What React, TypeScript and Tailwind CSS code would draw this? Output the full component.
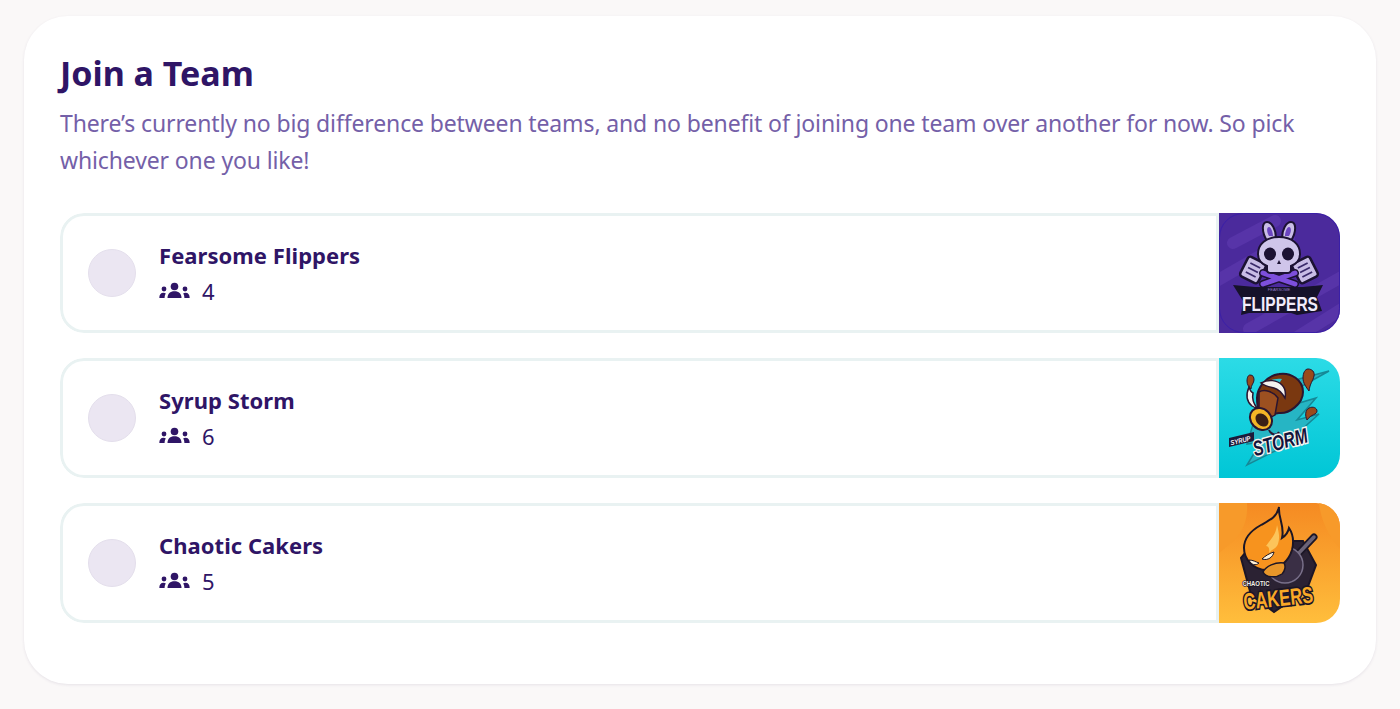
const TEAMS = [
  { name: 'Fearsome Flippers', count: 4, logo: 'flippers' },
  { name: 'Syrup Storm', count: 6, logo: 'storm' },
  { name: 'Chaotic Cakers', count: 5, logo: 'cakers' },
]

const LOGO_FONT = 'Liberation Sans, sans-serif'

function PeopleIcon() {
  return (
    <svg width="31" height="17" viewBox="0 0 31 17" fill="#2f1566">
      <circle cx="15.500" cy="4.500" r="3.800" />
      <path d="M8.500 16c0-4.200 2.600-6.700 7-6.700s7 2.500 7 6.700z" />
      <circle cx="5" cy="7" r="2.400" />
      <path d="M0.300 16c0-3.200 1.400-5.200 4.200-5.200 1 0 1.700.2 2.300.6-.8 1.200-1.200 2.700-1.200 4.600z" />
      <circle cx="26" cy="7" r="2.400" />
      <path d="M30.700 16c0-3.200-1.400-5.200-4.200-5.200-1 0-1.700.2-2.300.6.8 1.200 1.200 2.700 1.200 4.600z" />
    </svg>
  )
}

function FlippersLogo() {
  const spatula = (
    <g>
      <rect x="-10" y="-11" width="20" height="22" rx="3" fill="#c9bde6" stroke="#1c1233" strokeWidth="2.500" />
      <path d="M-5.500-5H5.500M-5.500 0H5.500M-5.500 5H5.500" stroke="#3a2a6a" strokeWidth="1.800" />
    </g>
  )
  return (
    <svg viewBox="0 0 121 120" className="w-full h-full block">
      <rect width="121" height="120" fill="#4b2a9c" />
      <path d="M14 30L56 8M-6 70L70 26M30 116L126 62M78 124L126 94" stroke="#5734a8" strokeWidth="12" strokeLinecap="round" />
      <rect x="0.500" y="0.500" width="120" height="119" rx="24" fill="none" stroke="#3a1fa8" />
      <path d="M48 28c-6-10-5-19 0-19 5 0 9 8 9 16zM72 28c6-10 5-19 0-19-5 0-9 8-9 16z" fill="#c9bde6" stroke="#1c1233" strokeWidth="2" />
      <path d="M50 23c-3-5-2-9 0-9 2 0 4 5 4 9zM70 23c3-5 2-9 0-9-2 0-4 5-4 9z" fill="#6b45c0" />
      <g transform="translate(34 57) rotate(27)">{spatula}</g>
      <g transform="translate(86 57) rotate(-27)">{spatula}</g>
      <path d="M44 60L76 71M76 60L44 71" stroke="#1c1233" strokeWidth="8" strokeLinecap="round" />
      <path d="M44 60L76 71M76 60L44 71" stroke="#7d4fdc" strokeWidth="5" strokeLinecap="round" />
      <path d="M60 24c-13 0-21 7-21 17 0 6 4 10 9 12v4c0 2 2 3 4 3h16c2 0 4-1 4-3v-4c5-2 9-6 9-12 0-10-8-17-21-17z" fill="#cfc5ea" stroke="#1c1233" strokeWidth="2" />
      <ellipse cx="51" cy="41" rx="6" ry="6.500" fill="#1c1233" />
      <ellipse cx="69" cy="41" rx="6" ry="6.500" fill="#1c1233" />
      <path d="M60 47l-2 4h4z" fill="#1c1233" />
      <path d="M14 72L36 74H84L104 72 98 84 103 98 78 102 72 100H30L22 102 24 88z" fill="#16122a" />
      <text x="60" y="77.500" textAnchor="middle" fontFamily={LOGO_FONT} fontSize="4" fill="#8f7cc0">FEARSOME</text>
      <text transform="translate(61 98) scale(0.74 1)" textAnchor="middle" fontFamily={LOGO_FONT} fontWeight="700" fontSize="21" fill="#f1ecfa">FLIPPERS</text>
    </svg>
  )
}

function StormLogo() {
  return (
    <svg viewBox="0 0 121 120" className="w-full h-full block">
      <defs>
        <linearGradient id="stormBg" x1="0" y1="0" x2="0" y2="1">
          <stop offset="0" stopColor="#2cdbe6" />
          <stop offset="1" stopColor="#00c6d6" />
        </linearGradient>
      </defs>
      <rect width="121" height="120" fill="url(#stormBg)" />
      <path d="M110 13L76 32 70 48 97 40 78 62 100 56 62 90 28 107 42 84 28 86 36 60 54 28z" fill="#26b5c4" stroke="#168896" strokeWidth="1.500" />
      <path d="M89 11c4 0 7 3 6 7-1 5-4 7-5 15-3-4-6-8-6-13 0-5 2-9 5-9z" fill="#9a4a1c" stroke="#2a1530" strokeWidth="1" />
      <path d="M31 17c3 0 4 2 4 5 0 3-3 5-3 9-2-2-4-4-4-8 0-3 1-6 3-6z" fill="#9a4a1c" stroke="#2a1530" strokeWidth="1" />
      <path d="M90 50c4-2 8 0 8 3 0 4-6 3-10 9-2-4-2-10 2-12z" fill="#9a4a1c" stroke="#2a1530" strokeWidth="1" />
      <path d="M38 40c0-9 8-22 22-24 12-2 24 6 24 18 0 12-14 22-24 21-6 0-8 5-14 3-7-2-8-10-8-18z" fill="#7a3810" stroke="#2a1530" strokeWidth="2" />
      <path d="M47 25c4-3 10-5 16-4l-4 6c-5 1-10 0-12-2z" fill="#2cc5d4" />
      <path d="M42 25c8-4 16-3 21 2 3 3 4 8 3 13-3-5-7-9-11-10-5-1-9-2-13-5z" fill="#f4f2f0" stroke="#2a1530" strokeWidth="1.500" />
      <path d="M30 29c-3 7-3 14 3 19 3 2 4 2 5 2-4-5-5-10-4-15-2-1-3-3-4-6z" fill="#f4f2f0" stroke="#2a1530" strokeWidth="1.500" />
      <path d="M40 34c5-3 14-1 19 6l-3 17c-6 4-14 2-16-6z" fill="#9c5020" stroke="#2a1530" strokeWidth="1.500" />
      <path d="M50 72c2 5 8 6 10 2" fill="none" stroke="#2a1530" strokeWidth="2" />
      <ellipse cx="42" cy="61" rx="10" ry="12" transform="rotate(-45 42 61)" fill="#f4b526" stroke="#2a1530" strokeWidth="2" />
      <ellipse cx="43" cy="62" rx="5.500" ry="7.500" transform="rotate(-45 43 62)" fill="#3a1f16" />
      <path d="M10 80L35 74 35 83 10 89z" fill="#1c1a3a" />
      <text transform="translate(22 85) rotate(-13) scale(0.85 1)" textAnchor="middle" fontFamily={LOGO_FONT} fontWeight="700" fontStyle="italic" fontSize="7" fill="#f4f2f8">SYRUP</text>
      <text transform="translate(63 91) rotate(-15) scale(0.74 1)" textAnchor="middle" fontFamily={LOGO_FONT} fontWeight="700" fontStyle="italic" fontSize="21" fill="#15133a" stroke="#f5f3ef" strokeWidth="3" paintOrder="stroke">STORM</text>
    </svg>
  )
}

function CakersLogo() {
  return (
    <svg viewBox="0 0 121 120" className="w-full h-full block">
      <defs>
        <linearGradient id="cakeBg" x1="0" y1="0" x2="0" y2="1">
          <stop offset="0" stopColor="#f58a22" />
          <stop offset="1" stopColor="#ffbe3c" />
        </linearGradient>
      </defs>
      <rect width="121" height="120" fill="url(#cakeBg)" />
      <path d="M0 50C12 40 30 30 28 0H0zM100 0c2 20 12 36 21 46V0z" fill="#f79a2a" />
      <path d="M22 55L36 38H84L97 62 88 86 55 109 32 92z" fill="#2b2233" stroke="#1c1626" strokeWidth="2" />
      <path d="M78 52L95 34" stroke="#1c1626" strokeWidth="7" strokeLinecap="round" />
      <path d="M78 52L95 34" stroke="#6c6478" strokeWidth="3.500" strokeLinecap="round" />
      <circle cx="66" cy="62" r="18" fill="#3a2f45" stroke="#79708a" strokeWidth="1.500" />
      <path d="M60 4c-1 11 6 19 3 31 3-2 6-5 7-10 4 6 5 14 3 22-3 10-12 20-25 20-14 0-23-11-23-22 0-10 8-18 17-23 9-5 16-8 18-18z" fill="#f7931e" stroke="#1c1626" strokeWidth="2" />
      <path d="M58 22c2 8 3 13 1 19-2 5-6 5-9 9 1-5-1-7-3-7 4-6 10-11 11-21z" fill="#fcc45a" />
      <path d="M30 57c4 0 7 2 10 3-3 3-8 2-10-3zM43 56c3-3 8-6 12-7-1 5-6 9-12 7z" fill="#fff3dc" stroke="#1c1626" strokeWidth="1" />
      <path d="M44 69c3-6 12-10 21-9 2 3 1 8-2 11-6 4-16 4-19-2z" fill="#e8962a" stroke="#1c1626" strokeWidth="1.500" />
      <text transform="translate(37 83) scale(0.85 1)" textAnchor="middle" fontFamily={LOGO_FONT} fontWeight="700" fontSize="7" fill="#f3efe8" stroke="#1c1626" strokeWidth="1.500" paintOrder="stroke">CHAOTIC</text>
      <text transform="translate(60 103) rotate(-6) scale(0.72 1)" textAnchor="middle" fontFamily={LOGO_FONT} fontWeight="700" fontSize="23" fill="#f9a826" stroke="#1c1626" strokeWidth="3.500" paintOrder="stroke">CAKERS</text>
    </svg>
  )
}

function Logo({ logo }: { logo: string }) {
  if (logo === 'flippers') return <FlippersLogo />
  if (logo === 'storm') return <StormLogo />
  return <CakersLogo />
}

export default function App() {
  return (
    <div className="min-h-[709px] bg-[#faf8f8] px-6 pt-4 font-['Noto_Sans',sans-serif]">
      <div className="h-[668px] rounded-[44px] bg-white px-9 pt-[35px] shadow-[0_1px_3px_rgba(60,40,90,0.1)]">
        <h1 className="text-[34px] leading-[44px] font-bold text-[#2f1566]">Join a Team</h1>
        <p className="mt-[10px] text-[23px] leading-[37px] tracking-[-0.13px] text-[#7460a8]">
          There’s currently no big difference between teams, and no benefit of joining one team over another for now. So pick whichever one you like!
        </p>
        <div className="mt-[34px] flex flex-col gap-[25px]">
          {TEAMS.map(team => (
            <div key={team.name} className="flex h-[120px] overflow-hidden rounded-3xl">
              <div className="flex flex-1 items-center rounded-l-3xl border-[3px] border-r-0 border-[#e9f2f2] pl-[25px]">
                <div className="h-12 w-12 rounded-full border border-[#e4dfec] bg-[#ebe6f2]" />
                <div className="ml-[23px] -mt-px">
                  <div className="text-[22px] leading-[30px] font-bold tracking-[0.05px] text-[#2f1566]">{team.name}</div>
                  <div className="mt-[6px] flex items-center gap-3 text-[22px] leading-[30px] text-[#2f1566]">
                    <PeopleIcon />
                    <span>{team.count}</span>
                  </div>
                </div>
              </div>
              <div className="w-[3px] bg-[#e9f2f2]" />
              <div className="h-[120px] w-[121px] shrink-0">
                <Logo logo={team.logo} />
              </div>
            </div>
          ))}
        </div>
      </div>
    </div>
  )
}
